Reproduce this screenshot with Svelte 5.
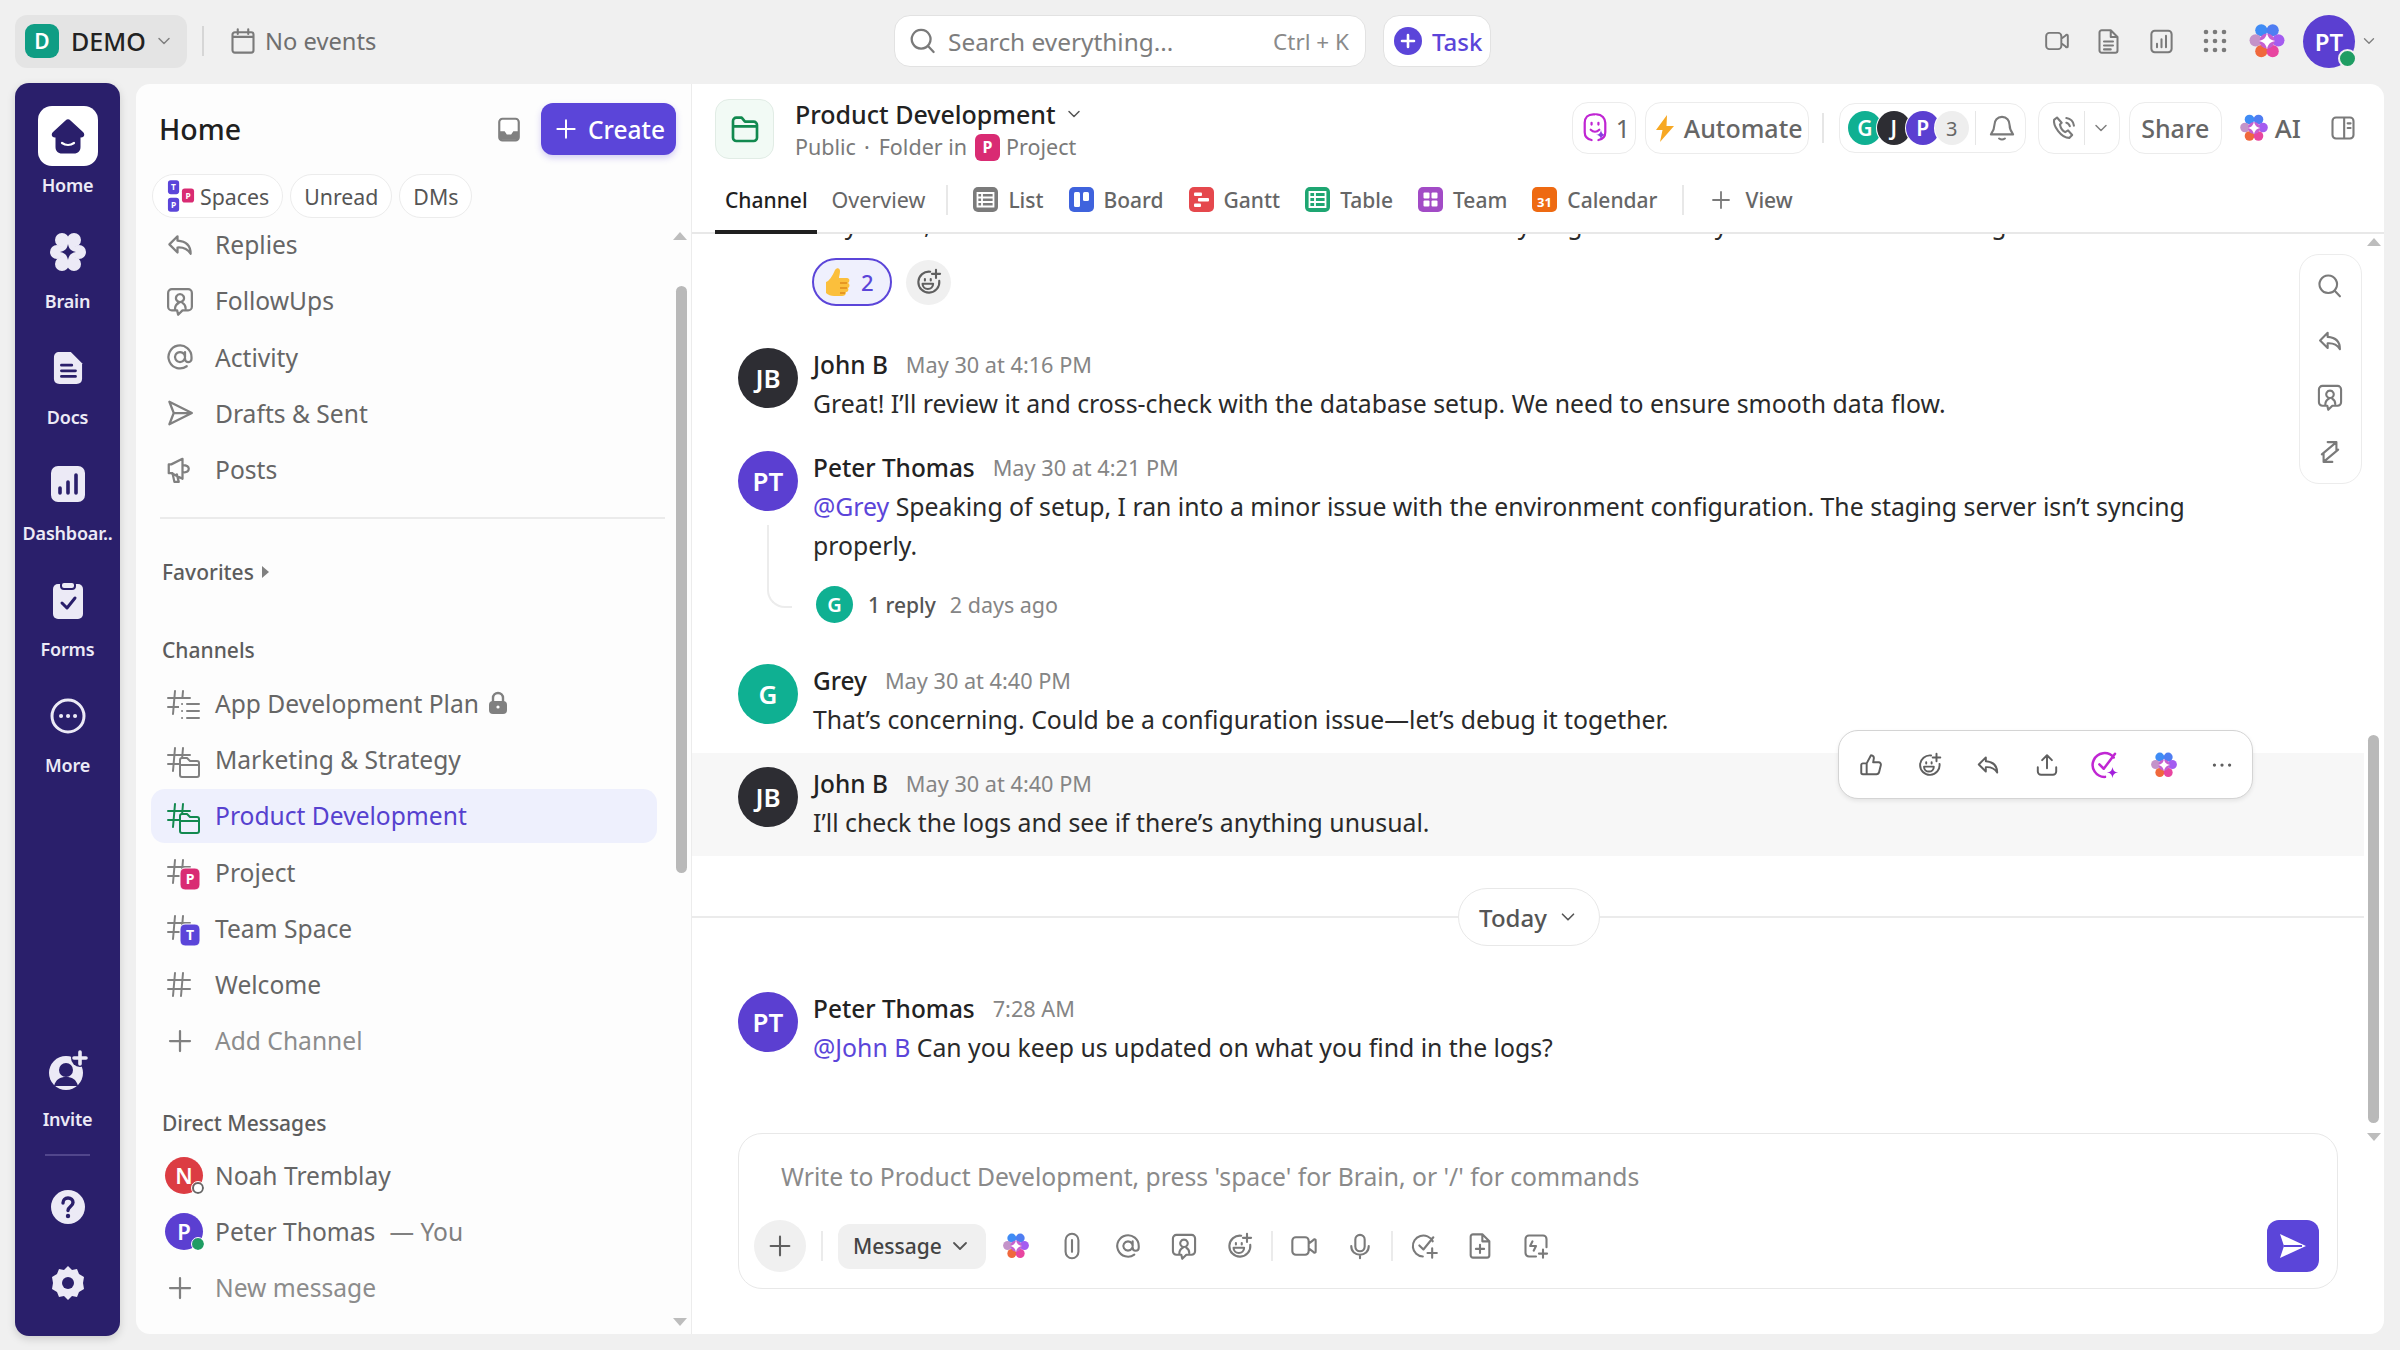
<script>
  const I = {
    chev: "M6 9l6 6 6-6",
    plus: "M12 4v16M4 12h16",
    reply: "M10 5 3.500 11.500 10 18v-4c4.500-.3 8 1 10.500 5 0-6-3.500-10-10.500-10.500z",
    follow: "M5.500 2.500h13a3 3 0 0 1 3 3v11a3 3 0 0 1-3 3H14l-3.500 3.500-.8-3.500H5.500a3 3 0 0 1-3-3v-11a3 3 0 0 1 3-3zM12 6.500a3.200 3.200 0 1 1-.01 0zM8 18.500c0-2.500 1-4 3-5M16.500 18c0-2-.8-3.500-2.500-4.500",
    at: "M12 8a4 4 0 1 0 .01 0zM16 8v5.500a2.600 2.600 0 0 0 5.200 0V12a9.200 9.200 0 1 0-3.800 7.400",
    send: "M3.500 3 21.500 12 3.500 21 7 12zM7 12h14.500",
    horn: "M14 3 5 7.500H3v7h2l9 4.500zM14 8c2.800 0 5 1 5 3s-2.200 3-5 3M6 14.500l1.500 7h3.500l-1.500-6",
    hash: "M9.500 3 8 21M16.500 3 15 21M3.500 8.500h17.500M3 15.500h17.500",
    search: "M10.500 3a7.500 7.500 0 1 0 .01 0zM16 16l4.500 4.800",
    cal: "M5 4.500h14a2 2 0 0 1 2 2V20a2 2 0 0 1-2 2H5a2 2 0 0 1-2-2V6.500a2 2 0 0 1 2-2zM7.500 2v4M16.500 2v4M3 8.500h18",
    video: "M5 4.500h8a3 3 0 0 1 3 3v9a3 3 0 0 1-3 3H5a3 3 0 0 1-3-3v-9a3 3 0 0 1 3-3zM16 10l4-3a1 1 0 0 1 2 .5v9a1 1 0 0 1-2 .5l-4-3",
    doc: "M6 2h8l6 6v12a2 2 0 0 1-2 2H6a2 2 0 0 1-2-2V4a2 2 0 0 1 2-2zM14 2v6h6M8 12h8M8 15.500h8M8 19h6",
    chart: "M6 2.500h12a3 3 0 0 1 3 3v13a3 3 0 0 1-3 3H6a3 3 0 0 1-3-3v-13a3 3 0 0 1 3-3zM8 17v-3M12 17V10M16 17V7",
    panel: "M6 3h12a3 3 0 0 1 3 3v12a3 3 0 0 1-3 3H6a3 3 0 0 1-3-3V6a3 3 0 0 1 3-3zM13 3v18M16 8h2.500M16 12h2.500",
    bell: "M12 2.500c-4 0-6.500 3-6.500 7 0 4-1.500 6-3 8h19c-1.500-2-3-4-3-8 0-4-2.500-7-6.500-7zM9.500 21c1.500 1 3.500 1 5 0",
    phone: "M6 3 3.500 5c-1 5 6 15.500 13 15.500l2.500-2.500-3.500-4-2.500 1.500c-2-1-4-4-4.500-6.500L10 7.500zM14 3.500c3.500.5 6 3 6.500 6.500M14 7.500c1.500.3 2.500 1.300 3 3",
    thumb: "M8 10.500 12 3c2 0 3 1.500 2.500 3.500L14 9.500h5c1.500 0 2.500 1.500 2 3l-1.500 6c-.3 1.300-1.200 2-2.500 2H8zM8 10.500H4.500a1.500 1.500 0 0 0-1.500 1.500v7a1.500 1.500 0 0 0 1.500 1.500H8",
    emoji: "M13 3.200a9 9 0 1 0 7.800 7.800M18 1.500v7M14.500 5h7M8.500 9.500v1.200M13.500 9.500v1.200M6.500 13.500h9c0 2.800-2 4.500-4.500 4.500s-4.500-1.700-4.500-4.500z",
    share: "M12 15V3M7.500 7.500 12 3l4.500 4.500M3.500 14v4a3 3 0 0 0 3 3h11a3 3 0 0 0 3-3v-4",
    dots: "M5 12h.01M12 12h.01M19 12h.01",
    clip: "M6.500 7a5.500 5.500 0 0 1 11 0v10a5.500 5.500 0 0 1-11 0zM12 7v10",
    mic: "M12 2.500a4 4 0 0 1 4 4v6a4 4 0 0 1-8 0v-6a4 4 0 0 1 4-4zM4.500 12c0 5 3.500 7.500 7.500 7.500s7.500-2.500 7.500-7.500M12 19.500v3",
    taskadd: "M19.500 8A9 9 0 1 0 11 21M8 11.500l3.500 3.500L20 4.500M19 14v8M15 18h8",
    docadd: "M6 2h8l6 6v12a2 2 0 0 1-2 2H6a2 2 0 0 1-2-2V4a2 2 0 0 1 2-2zM14 2v6h6M12 11v7M8.500 14.500h7",
    clipadd: "M12 21H6a3 3 0 0 1-3-3V6a3 3 0 0 1 3-3h12a3 3 0 0 1 3 3v7M9 8 7 12h5l-2 4M18 15v7M14.500 18.500h7",
    swap: "M5 14 17 4M10 3.500h7.500V11M19 10 7 20M14 20.500H6.500V13",
    inbox: "M6 2.500h12a3 3 0 0 1 3 3v14a3 3 0 0 1-3 3H6a3 3 0 0 1-3-3v-14a3 3 0 0 1 3-3z",
  };

  const rows = [
    { label: "Replies", d: I.reply },
    { label: "FollowUps", d: I.follow },
    { label: "Activity", d: I.at },
    { label: "Drafts & Sent", d: I.send },
    { label: "Posts", d: I.horn },
  ];

  const channels = [
    { label: "App Development Plan", kind: "list", lock: true },
    { label: "Marketing & Strategy", kind: "folder" },
    { label: "Product Development", kind: "folder", active: true },
    { label: "Project", kind: "P" },
    { label: "Team Space", kind: "T" },
    { label: "Welcome", kind: "plain" },
  ];

  const views = [
    { label: "List", c: "#7b7b7b", g: "list" },
    { label: "Board", c: "#3f63dd", g: "board" },
    { label: "Gantt", c: "#e5484d", g: "gantt" },
    { label: "Table", c: "#1ea672", g: "table" },
    { label: "Team", c: "#a24bc6", g: "team" },
    { label: "Calendar", c: "#ee6a12", g: "cal" },
  ];

  const msgTools = [I.thumb, I.emoji, I.reply, I.share];
  const composerA = [I.clip, I.at, I.follow, I.emoji];
  const composerB = [I.video, I.mic];
  const composerC = [I.taskadd, I.docadd, I.clipadd];
</script>

{#snippet ic(d, size = 26, cls = "")}
  <svg class="i {cls}" width={size} height={size} viewBox="0 0 24 24"><path {d} /></svg>
{/snippet}

{#snippet brain(size = 30)}
  <svg class="brain" width={size} height={size} viewBox="0 0 30 30">
    <circle cx="10.500" cy="6.500" r="4.800" fill="#3f8cf5" />
    <circle cx="19.500" cy="6.500" r="4.800" fill="#4f7df2" />
    <circle cx="24" cy="14.500" r="4.800" fill="#a45cf0" />
    <circle cx="6" cy="14.500" r="4.800" fill="#c493c9" />
    <circle cx="10.500" cy="23" r="4.800" fill="#f0683c" />
    <circle cx="19.500" cy="23" r="4.800" fill="#e845a0" />
    <circle cx="15" cy="15" r="6" fill="#c65fd0" />
    <path d="M15 8.500c.8 4 2.500 5.700 6.500 6.500-4 .8-5.700 2.500-6.500 6.500-.8-4-2.500-5.700-6.500-6.500 4-.8 5.700-2.500 6.500-6.500z" fill="#fff" />
  </svg>
{/snippet}

{#snippet chan(kind, active)}
  <svg class="chan" class:on={active} width="36" height="36" viewBox="0 0 36 36">
    <path class="h" d="M10 6 8 29M18 6l-2 23M3 13h22M3 22h22" />
    {#if kind === "list"}
      <rect x="14" y="14" width="22" height="22" fill="#fdfdfd" />
      <path class="h" d="M17 19h.1M17 26h.1M17 33h.1M22 19h12M22 26h12M22 33h12" />
    {:else if kind === "folder"}
      <path class="h fo" d="M15 18a2 2 0 0 1 2-2h5l3 3h7a2 2 0 0 1 2 2v12a2 2 0 0 1-2 2H17a2 2 0 0 1-2-2zM15 23h19" />
    {:else if kind === "P" || kind === "T"}
      <rect x="15" y="14" width="20" height="22" rx="5" fill={kind === "P" ? "#d92b73" : "#5b45d9"} stroke="#fdfdfd" stroke-width="1" />
      <text x="25" y="30" text-anchor="middle" class="bt">{kind}</text>
    {/if}
  </svg>
{/snippet}

{#snippet viewIcon(v)}
  <svg class="vi" width="25" height="25" viewBox="0 0 25 25">
    <rect width="25" height="25" rx="5" fill={v.c} />
    {#if v.g === "list"}
      <path class="w" d="M4.500 6h16v13.500h-16zM4.500 10.500h16M4.500 15h16M9 6v13.500" />
    {:else if v.g === "board"}
      <rect x="5" y="5" width="6" height="15" rx="1.500" fill="#fff" /><rect x="14" y="5" width="6" height="9" rx="1.500" fill="#fff" />
    {:else if v.g === "gantt"}
      <rect x="5" y="5.500" width="8" height="3.500" rx="1" fill="#fff" /><rect x="9" y="11" width="11" height="3.500" rx="1" fill="#fff" /><rect x="5" y="16.500" width="7" height="3.500" rx="1" fill="#fff" />
    {:else if v.g === "table"}
      <path class="w" d="M4.500 5h16v15h-16zM4.500 10h16M4.500 15h16M10 5v15" />
    {:else if v.g === "team"}
      <rect x="5.500" y="5.500" width="6" height="6" rx="1" fill="#fff" /><rect x="13.500" y="5.500" width="6" height="6" rx="1" fill="#fff" /><rect x="5.500" y="13.500" width="6" height="6" rx="1" fill="#fff" /><rect x="13.500" y="13.500" width="6" height="6" rx="1" fill="#fff" />
    {:else}
      <text x="12.500" y="20" text-anchor="middle" class="cal31">31</text>
    {/if}
  </svg>
{/snippet}

{#snippet msgHead(name, time)}
  <div class="mhead"><span class="name">{name}</span><span class="time">{time}</span></div>
{/snippet}

<div class="app">
  <header class="top">
    <div class="top-left">
      <div class="workspace">
        <span class="ws-badge">D</span>
        <span class="ws-name">DEMO</span>
        {@render ic(I.chev, 20, "chev")}
      </div>
      <span class="vline"></span>
      {@render ic(I.cal, 28, "grey")}
      <span class="noev">No events</span>
    </div>
    <div class="search">
      {@render ic(I.search, 30, "grey")}
      <span class="search-t">Search everything...</span>
      <span class="kbd">Ctrl + K</span>
    </div>
    <div class="taskbtn">
      <svg width="28" height="28" viewBox="0 0 28 28"><circle cx="14" cy="14" r="14" fill="#5b45d9" /><path d="M14 8v12M8 14h12" stroke="#fff" stroke-width="2.600" stroke-linecap="round" /></svg>
      <span>Task</span>
    </div>
    <div class="top-right">
      {@render ic(I.video, 26, "grey")}
      {@render ic(I.doc, 27, "grey")}
      {@render ic(I.chart, 27, "grey")}
      <svg width="24" height="24" viewBox="0 0 24 24" class="grid9">
        {#each [3, 12, 21] as y}{#each [3, 12, 21] as x}<circle cx={x} cy={y} r="2.300" />{/each}{/each}
      </svg>
      {@render brain(38)}
      <div class="me">
        <span class="av me-av">PT</span>
        <span class="dot"></span>
      </div>
      {@render ic(I.chev, 18, "chev mechev")}
    </div>
  </header>

  <div class="body">
    <nav class="nav">
      <div class="nitem">
        <div class="nbox home">
          <svg width="34" height="35" viewBox="0 0 34 35"><path d="M14.500 1.500a3.500 3.500 0 0 1 5 0L32 13c2.500 2.500 1 5.500-2 5.500h-.5V28c0 4-2.500 6.500-6.500 6.500H11c-4 0-6.500-2.500-6.500-6.500v-9.500H4c-3 0-4.500-3-2-5.500z" fill="#2a1f6b" /><path d="M11 24c3.500 2.500 8.500 2.500 12 0" stroke="#fff" stroke-width="2.200" fill="none" stroke-linecap="round" /></svg>
        </div>
        <span>Home</span>
      </div>
      <div class="nitem">
        <div class="nbox">
          <svg width="36" height="42" viewBox="0 0 36 42">
            <g fill="#eceaf6"><circle cx="12" cy="9" r="7" /><circle cx="24" cy="9" r="7" /><circle cx="29" cy="21" r="7" /><circle cx="7" cy="21" r="7" /><circle cx="12" cy="33" r="7" /><circle cx="24" cy="33" r="7" /><circle cx="18" cy="21" r="9" /></g>
            <path d="M18 13c1 5 3 7 8 8-5 1-7 3-8 8-1-5-3-7-8-8 5-1 7-3 8-8z" fill="#2a1f6b" />
          </svg>
        </div>
        <span>Brain</span>
      </div>
      <div class="nitem">
        <div class="nbox">
          <svg width="30" height="34" viewBox="0 0 32 36"><path d="M7 1h12l12 12v16c0 4-2 6-6 6H7c-4 0-6-2-6-6V7c0-4 2-6 6-6z" fill="#eceaf6" /><path d="M9 15h11M9 21h15M9 27h15" stroke="#2a1f6b" stroke-width="3" stroke-linecap="round" /></svg>
        </div>
        <span>Docs</span>
      </div>
      <div class="nitem">
        <div class="nbox">
          <svg width="34" height="36" viewBox="0 0 34 36"><rect width="34" height="36" rx="7" fill="#eceaf6" /><path d="M9 27v-5M17 27V16M25 27V9" stroke="#2a1f6b" stroke-width="3.600" stroke-linecap="round" /></svg>
        </div>
        <span>Dashboar..</span>
      </div>
      <div class="nitem">
        <div class="nbox">
          <svg width="30" height="38" viewBox="0 0 30 38"><rect y="3" width="30" height="35" rx="5" fill="#eceaf6" /><rect x="8" y="1" width="14" height="7" rx="3" fill="#eceaf6" stroke="#2a1f6b" stroke-width="2" /><path d="M9 22l5 5 8-10" stroke="#2a1f6b" stroke-width="3" fill="none" stroke-linecap="round" stroke-linejoin="round" /></svg>
        </div>
        <span>Forms</span>
      </div>
      <div class="nitem">
        <div class="nbox">
          <svg width="36" height="36" viewBox="0 0 36 36"><circle cx="18" cy="18" r="16" fill="none" stroke="#eceaf6" stroke-width="3" /><path d="M11 18h.1M18 18h.1M25 18h.1" stroke="#eceaf6" stroke-width="4" stroke-linecap="round" /></svg>
        </div>
        <span>More</span>
      </div>
      <div class="nbottom">
        <div class="nitem">
          <div class="nbox">
            <svg width="40" height="40" viewBox="0 0 40 40"><circle cx="18" cy="23" r="17" fill="#eceaf6" /><circle cx="18" cy="20" r="7" fill="#2a1f6b" /><path d="M6 36c2-7 6-9 12-9s10 2 12 9z" fill="#2a1f6b" /><circle cx="32" cy="8" r="9" fill="#2a1f6b" /><path d="M32 2v12M26 8h12" stroke="#eceaf6" stroke-width="3.600" stroke-linecap="round" /></svg>
          </div>
          <span>Invite</span>
        </div>
        <span class="nline"></span>
        <div class="nbox nhelp">
          <svg width="34" height="34" viewBox="0 0 34 34"><circle cx="17" cy="17" r="17" fill="#eceaf6" /><path d="M12 13c0-3 2-5 5-5s5 2 5 4.500c0 4-5 4-5 8" stroke="#2a1f6b" stroke-width="3.400" fill="none" stroke-linecap="round" /><circle cx="17" cy="26" r="2.200" fill="#2a1f6b" /></svg>
        </div>
        <div class="nbox ngear">
          <svg width="34" height="36" viewBox="0 0 34 36"><path d="M17 1l4 4 5-1 2 5 5 3-1 6 1 6-5 3-2 5-5-1-4 4-4-4-5 1-2-5-5-3 1-6-1-6 5-3 2-5 5 1z" fill="#eceaf6" /><circle cx="17" cy="18" r="6" fill="#2a1f6b" /></svg>
        </div>
      </div>
    </nav>

    <aside class="panel">
      <div class="phead">
        <span class="ptitle">Home</span>
        <svg class="inbox" width="26" height="28" viewBox="0 0 24 24"><path d={I.inbox} fill="#fff" stroke="#808080" stroke-width="2" /><path d="M3 14h5l2 3h4l2-3h5v6a2 2 0 0 1-2 2H5a2 2 0 0 1-2-2z" fill="#808080" /></svg>
        <button class="create">{@render ic(I.plus, 26, "wh")}<span>Create</span></button>
      </div>
      <div class="pills">
        <span class="pill">
          <svg width="30" height="36" viewBox="0 0 30 36">
            <rect x="1" y="1" width="12" height="15" rx="3" fill="#5b45d9" /><rect x="1" y="20" width="12" height="15" rx="3" fill="#5b45d9" /><rect x="16" y="10" width="13" height="15" rx="3" fill="#d92b73" />
            <text x="7" y="12" class="st">T</text><text x="7" y="31" class="st">P</text><text x="22.500" y="21" class="st">P</text>
          </svg>
          Spaces
        </span>
        <span class="pill">Unread</span>
        <span class="pill">DMs</span>
      </div>
      <div class="pscroll">
        <div class="plist">
          {#each rows as r}
            <div class="row">
              <span class="ricon">{@render ic(r.d, 30, "rowi")}</span>
              <span>{r.label}</span>
            </div>
          {/each}
          <div class="phr"></div>
          <div class="sect fav">Favorites <span class="tri"></span></div>
          <div class="sect chs">Channels</div>
          {#each channels as c}
            <div class="row" class:active={c.active}>
              <span class="ricon">{@render chan(c.kind, c.active)}</span>
              <span>{c.label}</span>
              {#if c.lock}
                <svg class="lock" width="20" height="24" viewBox="0 0 20 24"><path d="M5 11V7a5 5 0 0 1 10 0v4" fill="none" stroke="#808080" stroke-width="2.400" /><rect x="1" y="10" width="18" height="13" rx="4" fill="#808080" /><circle cx="10" cy="16" r="1.600" fill="#fff" /></svg>
              {/if}
            </div>
          {/each}
          <div class="row muted"><span class="ricon">{@render ic(I.plus, 30, "rowi")}</span><span>Add Channel</span></div>
          <div class="sect dms">Direct Messages</div>
          <div class="row">
            <span class="ricon"><span class="dmav red">N<span class="pres off"></span></span></span>
            <span>Noah Tremblay</span>
          </div>
          <div class="row">
            <span class="ricon"><span class="dmav pur">P<span class="pres on"></span></span></span>
            <span>Peter Thomas</span><span class="you">— You</span>
          </div>
          <div class="row muted"><span class="ricon">{@render ic(I.plus, 30, "rowi")}</span><span>New message</span></div>
        </div>
      </div>
      <span class="sb-up p"></span>
      <span class="sb-thumb p"></span>
      <span class="sb-down p"></span>
    </aside>

    <main class="main">
      <div class="mh">
        <div class="folderbox">
          <svg class="i fol" width="32" height="32" viewBox="0 0 24 24"><path d="M3 6a2.500 2.500 0 0 1 2.500-2.500h4L12 6.500h6.500A2.500 2.500 0 0 1 21 9v9.500a2.500 2.500 0 0 1-2.500 2.500h-13A2.500 2.500 0 0 1 3 18.500zM3 10h18" /></svg>
        </div>
        <div class="mh-t">
          <div class="mh-title">Product Development {@render ic(I.chev, 20, "chev dk")}</div>
          <div class="mh-sub"><span>Public</span><span class="mid">·</span><span>Folder in</span><span class="pbadge">P</span><span>Project</span></div>
        </div>
        <div class="mh-r">
          <div class="hbtn one">
            <svg width="24" height="32" viewBox="0 0 28 36"><path d="M14 2h-2C6 2 2 6 2 12v11c0 5 3 8 8 9M18 32c5-1 8-3 8-9V12c0-5-4-10-10-10M10 12v2M18 12v2M9 20c3 3 7 3 10 0" fill="none" stroke="#c026d3" stroke-width="2.600" stroke-linecap="round" /><path d="M21 20c.6 4 2 5.500 6 6-4 .5-5.400 2-6 6-.6-4-2-5.500-6-6 4-.5 5.400-2 6-6z" fill="#8b3fe0" /></svg>
            <span>1</span>
          </div>
          <div class="hbtn auto">
            <svg width="20" height="27" viewBox="0 0 20 27"><path d="M12 0 1 15h6.500L5 27 19 11h-7.500z" fill="#f7a823" /></svg>
            <span>Automate</span>
          </div>
          <span class="hv"></span>
          <div class="hbtn people">
            <span class="av s g">G</span><span class="av s k">J</span><span class="av s p">P</span><span class="av s more">3</span>
            <span class="hv in"></span>
            {@render ic(I.bell, 28, "grey bell")}
          </div>
          <div class="hbtn call">
            {@render ic(I.phone, 28, "grey")}
            <span class="hv in2"></span>
            {@render ic(I.chev, 20, "chev")}
          </div>
          <div class="hbtn sharebtn">Share</div>
          <div class="aib">{@render brain(30)}<span>AI</span></div>
          {@render ic(I.panel, 28, "grey pn")}
        </div>
      </div>

      <div class="tabs">
        <span class="tab cur">Channel</span>
        <span class="tab ov">Overview</span>
        <span class="tv"></span>
        {#each views as v}
          <span class="vtab">{@render viewIcon(v)}<span>{v.label}</span></span>
        {/each}
        <span class="tv end"></span>
        <span class="vtab add">{@render ic(I.plus, 24, "grey")}<span>View</span></span>
      </div>

      <div class="feed">
        <div class="feed-in">
          <p class="cut">Hey team, the latest build is done and the old schema is to try to go on the day of the launch and bring it to the team.</p>
          <div class="reacts">
            <span class="react">
              <svg width="26" height="30" viewBox="0 0 26 30"><path d="M10 3c2-3 5-2 5 1 0 3-1 5-1 7h8c3 0 3 4 1 5 2 1 2 4 0 5 1 2 0 4-2 4 0 3-2 4-4 4H9c-3 0-6-1-8-3V15c3-1 6-5 9-12z" fill="#fbbf3c" /><path d="M15 16h7M15 21h7M15 26h5" stroke="#e08a1b" stroke-width="1.400" /></svg>
              <span>2</span>
            </span>
            <span class="addreact">{@render ic(I.emoji, 28, "dark")}</span>
          </div>

          <div class="msg jb1">
            <span class="av big k">JB</span>
            <div class="mbody">
              {@render msgHead("John B", "May 30 at 4:16 PM")}
              <p>Great! I’ll review it and cross-check with the database setup. We need to ensure smooth data flow.</p>
            </div>
          </div>

          <div class="msg pt1">
            <span class="av big p">PT</span>
            <span class="thread"></span>
            <div class="mbody">
              {@render msgHead("Peter Thomas", "May 30 at 4:21 PM")}
              <p><span class="ment">@Grey</span> Speaking of setup, I ran into a minor issue with the environment configuration. The staging server isn’t syncing properly.</p>
              <div class="replies">
                <span class="av rg g">G</span>
                <span class="rn">1 reply</span>
                <span class="rt">2 days ago</span>
              </div>
            </div>
          </div>

          <div class="msg gr">
            <span class="av big g">G</span>
            <div class="mbody">
              {@render msgHead("Grey", "May 30 at 4:40 PM")}
              <p>That’s concerning. Could be a configuration issue—let’s debug it together.</p>
            </div>
          </div>

          <div class="msg hover">
            <span class="av big k">JB</span>
            <div class="mbody">
              {@render msgHead("John B", "May 30 at 4:40 PM")}
              <p>I’ll check the logs and see if there’s anything unusual.</p>
            </div>
            <div class="tools">
              {#each msgTools as d}
                <span class="tl">{@render ic(d, 26, "dark")}</span>
              {/each}
              <span class="tl">
                <svg width="30" height="30" viewBox="0 0 24 24" class="i pk"><path d="M19 6A9.500 9.500 0 1 0 12 21.500M7.500 11.500l3.500 3.500L20 3" /><path class="pkf" d="M18 13.500c.5 3 1.500 4 4.500 4.500-3 .5-4 1.500-4.500 4.500-.5-3-1.500-4-4.500-4.500 3-.5 4-1.500 4.500-4.500z" /></svg>
              </span>
              <span class="tl">{@render brain(28)}</span>
              <span class="tl">{@render ic(I.dots, 26, "dark fat")}</span>
            </div>
          </div>

          <div class="today">
            <span class="tline"></span>
            <span class="tpill">Today {@render ic(I.chev, 22, "chev dk")}</span>
            <span class="tline"></span>
          </div>

          <div class="msg last">
            <span class="av big p">PT</span>
            <div class="mbody">
              {@render msgHead("Peter Thomas", "7:28 AM")}
              <p><span class="ment">@John B</span> Can you keep us updated on what you find in the logs?</p>
            </div>
          </div>
        </div>

        <div class="rail">
          {@render ic(I.search, 28, "grey")}
          {@render ic(I.reply, 28, "grey")}
          {@render ic(I.follow, 28, "grey")}
          {@render ic(I.swap, 28, "grey")}
        </div>
        <span class="sb-up m"></span>
        <span class="sb-thumb m"></span>
        <span class="sb-down m"></span>
      </div>

      <div class="composer">
        <div class="ph">Write to Product Development, press 'space' for Brain, or '/' for commands</div>
        <div class="ctools">
          <span class="cplus">{@render ic(I.plus, 28, "dark")}</span>
          <span class="cv first"></span>
          <span class="cmsg">Message {@render ic(I.chev, 24, "chev dk")}</span>
          <span class="cb brainb">{@render brain(28)}</span>
          {#each composerA as d}<span class="cb">{@render ic(d, 28, "grey")}</span>{/each}
          <span class="cv"></span>
          {#each composerB as d}<span class="cb">{@render ic(d, 28, "grey")}</span>{/each}
          <span class="cv"></span>
          {#each composerC as d}<span class="cb">{@render ic(d, 28, "grey")}</span>{/each}
          <span class="csend">
            <svg width="30" height="28" viewBox="0 0 30 28"><path d="M2 2 28 14 2 26l4-12z" fill="#fff" /><path d="M6 14h18" stroke="#5b45d9" stroke-width="2" /></svg>
          </span>
        </div>
      </div>
    </main>
  </div>
</div>

<style>
  :global(body) {
    margin: 0;
    background: #f0f0f0;
  }

  .app {
    width: 2400px;
    height: 1350px;
    overflow: hidden;
    display: flex;
    flex-direction: column;
    background: #f0f0f0;
    font-family: "Noto Sans", "Open Sans", sans-serif;
    font-size: 24px;
    color: #2a2a2a;
  }

  p { margin: 0; }

  .i {
    fill: none;
    stroke: currentColor;
    stroke-width: 1.8;
    stroke-linecap: round;
    stroke-linejoin: round;
    flex: none;
    display: block;
  }
  .grey { color: #7a7a7a; }
  .dark { color: #5f5f5f; }
  .wh { color: #fff; }
  .chev { color: #808080; }
  .dk { color: #555; }
  .fat { stroke-width: 3; }
  .brain { flex: none; display: block; }

  .av {
    display: flex;
    align-items: center;
    justify-content: center;
    border-radius: 50%;
    color: #fff;
    font-weight: 600;
    flex: none;
  }
  .av.g { background: #0fb092; }
  .av.k { background: #2d2d33; }
  .av.p { background: #5b3fd1; }

  /* top bar */
  .top {
    height: 84px;
    flex: none;
    display: flex;
    align-items: center;
    padding: 0 0 2px 15px;
    box-sizing: border-box;
  }
  .top-left {
    width: 879px;
    display: flex;
    align-items: center;
  }
  .workspace {
    width: 172px;
    height: 53px;
    box-sizing: border-box;
    background: #e4e4e4;
    border-radius: 12px;
    display: flex;
    align-items: center;
    padding-left: 10px;
  }
  .ws-badge {
    width: 34px;
    height: 34px;
    border-radius: 9px;
    background: #0f9d84;
    color: #fff;
    font-size: 21px;
    font-weight: 600;
    display: flex;
    align-items: center;
    justify-content: center;
  }
  .ws-name {
    font-size: 25px;
    font-weight: 500;
    color: #222;
    margin: 0 8px 0 12px;
  }
  .vline {
    width: 2px;
    height: 30px;
    background: #d6d6d6;
    margin: 0 25px 0 15px;
  }
  .noev {
    margin-left: 8px;
    color: #6f6f6f;
    font-size: 23.700px;
  }
  .search {
    width: 472px;
    height: 52px;
    box-sizing: border-box;
    background: #fff;
    border: 1px solid #e2e2e2;
    border-radius: 16px;
    display: flex;
    align-items: center;
    padding: 0 16px 0 13px;
  }
  .search-t {
    margin-left: 10px;
    color: #7d7d7d;
    font-size: 24.400px;
  }
  .kbd {
    margin-left: auto;
    color: #8a8a8a;
    font-size: 22.500px;
  }
  .taskbtn {
    width: 108px;
    height: 52px;
    box-sizing: border-box;
    margin-left: 17px;
    background: #fff;
    border: 1px solid #e2e2e2;
    border-radius: 16px;
    display: flex;
    align-items: center;
    gap: 10px;
    padding-left: 10px;
    color: #5b45d9;
    font-size: 24px;
    font-weight: 500;
  }
  .top-right {
    margin-left: auto;
    display: flex;
    align-items: center;
    padding-right: 22px;
  }
  .top-right > :global(svg:nth-child(1)) { margin-right: 25px; }
  .top-right > :global(svg:nth-child(2)) { margin-right: 26px; }
  .top-right > :global(svg:nth-child(3)) { margin-right: 28px; }
  .top-right > :global(svg:nth-child(4)) { margin-right: 21px; }
  .top-right > :global(svg:nth-child(5)) { margin-right: 17px; }
  .grid9 { fill: #7a7a7a; }
  .me {
    position: relative;
    width: 52px;
    height: 53px;
    margin-right: 5px;
  }
  .me-av {
    width: 52px;
    height: 53px;
    background: #5b3fd1;
    font-size: 24px;
  }
  .dot {
    position: absolute;
    right: -2px;
    bottom: 0;
    width: 15px;
    height: 15px;
    border-radius: 50%;
    background: #1f9d63;
    border: 2px solid #f0f0f0;
  }

  /* app layout */
  .body {
    flex: 1;
    min-height: 0;
    display: flex;
    padding: 0 16px 16px 15px;
  }

  /* left nav */
  .nav {
    width: 105px;
    flex: none;
    margin: -1px 16px -2px 0;
    padding: 23px 0;
    box-sizing: border-box;
    background: #2a1f6b;
    border-radius: 14px;
    display: flex;
    flex-direction: column;
    align-items: center;
    color: #eceaf6;
    box-shadow: 0 3px 8px rgba(0, 0, 0, .15);
  }
  .nitem {
    height: 116px;
    flex: none;
    display: flex;
    flex-direction: column;
    align-items: center;
  }
  .nitem span {
    margin-top: 7px;
    font-size: 18px;
    line-height: 25px;
    font-weight: 600;
    white-space: nowrap;
    letter-spacing: -.2px;
  }
  .nbox {
    width: 60px;
    height: 60px;
    flex: none;
    display: flex;
    align-items: center;
    justify-content: center;
  }
  .home {
    background: #fff;
    border-radius: 14px;
  }
  .nbottom {
    margin-top: auto;
    display: flex;
    flex-direction: column;
    align-items: center;
  }
  .nbottom .nitem { height: 91px; }
  .nline {
    width: 45px;
    height: 2px;
    background: #51468c;
    margin-top: 23px;
  }
  .nhelp { margin-top: 21px; }
  .ngear { margin-top: 16px; }

  /* side panel */
  .panel {
    width: 556px;
    flex: none;
    position: relative;
    background: #fdfdfd;
    border-radius: 14px 0 0 14px;
    border-right: 1px solid #ececec;
    box-sizing: border-box;
    display: flex;
    flex-direction: column;
    overflow: hidden;
  }
  .phead {
    display: flex;
    align-items: center;
    padding: 19px 15px 0 23px;
  }
  .ptitle {
    font-size: 28.500px;
    font-weight: 500;
    color: #202020;
  }
  .inbox { margin-left: auto; margin-right: 19px; }
  .create {
    width: 135px;
    height: 52px;
    border: 0;
    border-radius: 12px;
    background: #5b45d9;
    color: #fff;
    font: 500 24.500px "Noto Sans", sans-serif;
    display: flex;
    align-items: center;
    gap: 9px;
    padding: 0 0 0 12px;
    box-shadow: 0 3px 6px rgba(91, 69, 217, .25);
  }
  .pills {
    display: flex;
    gap: 7px;
    margin: 19px 0 0 16px;
  }
  .pill {
    height: 44px;
    box-sizing: border-box;
    border: 1px solid #ececec;
    border-radius: 22px;
    background: #fff;
    padding: 0 13px;
    display: flex;
    align-items: center;
    gap: 5px;
    font-size: 21.300px;
    color: #555;
  }
  .pill svg { width: 28px; height: 34px; margin-left: 1px; }
  .st {
    font: 700 9px "Noto Sans", sans-serif;
    fill: #fff;
    text-anchor: middle;
  }
  .pscroll {
    flex: 1;
    min-height: 0;
    overflow: hidden;
    margin-top: 10px;
  }
  .plist {
    margin: -10px 34px 0 15px;
  }
  .row {
    height: 53.250px;
    margin-bottom: 3px;
    border-radius: 14px;
    display: flex;
    align-items: center;
    color: #666;
    font-size: 24.600px;
    white-space: nowrap;
  }
  .ricon {
    width: 64px;
    flex: none;
    padding-left: 14px;
    box-sizing: border-box;
    display: flex;
  }
  .rowi { color: #808080; }
  .row.active {
    background: #eef0fd;
    color: #5641cf;
  }
  .muted { color: #8c8c8c; }
  .lock { margin-left: 9px; }
  .you { margin-left: 14px; color: #808080; }
  .chan { display: block; }
  .h {
    fill: none;
    stroke: #808080;
    stroke-width: 2;
    stroke-linecap: round;
    stroke-linejoin: round;
  }
  .fo { fill: #fdfdfd; }
  .on .h { stroke: #12894f; }
  .on .fo { fill: #eef0fd; }
  .bt {
    font: 700 14px "Noto Sans", sans-serif;
    fill: #fff;
  }
  .phr {
    height: 2px;
    background: #ebebeb;
    margin: 21px -8px 0 9px;
  }
  .sect {
    height: 30px;
    display: flex;
    align-items: center;
    padding-left: 11px;
    font-size: 21px;
    color: #5c5c5c;
    font-weight: 500;
  }
  .fav { margin-top: 38px; gap: 8px; }
  .chs { margin: 48px 0 11.500px; }
  .dms { margin: 40.500px 0 10.500px; }
  .tri {
    border-left: 7px solid #808080;
    border-top: 6px solid transparent;
    border-bottom: 6px solid transparent;
  }
  .dmav {
    position: relative;
    width: 38px;
    height: 37px;
    margin-left: 0;
    border-radius: 50%;
    color: #fff;
    font-size: 22px;
    font-weight: 600;
    display: flex;
    align-items: center;
    justify-content: center;
  }
  .red { background: #dc3c43; }
  .pur { background: #5b3fd1; }
  .pres {
    position: absolute;
    right: -1px;
    bottom: 0;
    width: 12px;
    height: 12px;
    border-radius: 50%;
    box-sizing: border-box;
    border: 2px solid #fff;
    outline: 1px solid #fff;
  }
  .pres.on { background: #1f9d63; border-color: #1f9d63; }
  .pres.off { background: #fff; border-color: #666; }

  .sb-up, .sb-down {
    position: absolute;
    width: 0;
    height: 0;
    border-left: 7px solid transparent;
    border-right: 7px solid transparent;
  }
  .sb-up { border-bottom: 8px solid #bdbdbd; }
  .sb-down { border-top: 8px solid #bdbdbd; }
  .sb-thumb {
    position: absolute;
    width: 11px;
    border-radius: 6px;
    background: #b9b9b9;
  }
  .sb-up.p { top: 148px; right: 4px; }
  .sb-thumb.p { top: 202px; right: 4px; height: 587px; }
  .sb-down.p { bottom: 8px; right: 4px; }
  .sb-up.m { top: 4px; right: 3px; }
  .sb-thumb.m { top: 501px; right: 5px; height: 388px; }
  .sb-down.m { bottom: -8px; right: 3px; }

  /* main */
  .main {
    flex: 1;
    min-width: 0;
    background: #fff;
    border-radius: 0 14px 14px 0;
    display: flex;
    flex-direction: column;
  }
  .mh {
    height: 90px;
    flex: none;
    box-sizing: border-box;
    display: flex;
    align-items: flex-start;
    padding: 15px 27px 0 23px;
  }
  .folderbox {
    width: 59px;
    height: 60px;
    box-sizing: border-box;
    background: #f2faf5;
    border: 1px solid #e1ece5;
    border-radius: 14px;
    display: flex;
    align-items: center;
    justify-content: center;
  }
  .fol { color: #12894f; stroke-width: 2; }
  .mh-t { margin-left: 21px; }
  .mh-title {
    display: flex;
    align-items: center;
    gap: 8px;
    font-size: 25px;
    line-height: 30px;
    font-weight: 500;
    color: #222;
  }
  .mh-sub {
    display: flex;
    align-items: center;
    margin-top: 4px;
    font-size: 21.500px;
    line-height: 28px;
    color: #7a7a7a;
  }
  .mid { margin: 0 9px 0 8px; }
  .pbadge {
    width: 25px;
    height: 27px;
    border-radius: 6px;
    background: #d92b73;
    color: #fff;
    font-size: 16px;
    font-weight: 700;
    display: flex;
    align-items: center;
    justify-content: center;
    margin: 0 6px 0 8px;
  }
  .mh-r {
    margin-left: auto;
    margin-top: 3px;
    display: flex;
    align-items: center;
  }
  .hbtn {
    height: 52px;
    box-sizing: border-box;
    border: 1px solid #ececec;
    border-radius: 16px;
    display: flex;
    align-items: center;
    color: #666;
    font-size: 25px;
  }
  .one { width: 64px; gap: 9px; padding-left: 10px; margin-right: 9px; }
  .auto { width: 164px; gap: 9px; padding-left: 9px; }
  .auto span { font-weight: 500; }
  .hv {
    width: 2px;
    height: 30px;
    background: #e6e6e6;
    margin: 0 15px 0 13px;
  }
  .people { width: 187px; height: 50px; padding-left: 8px; margin-right: 12px; }
  .av.s {
    width: 34px;
    height: 34px;
    font-size: 21px;
    box-shadow: 0 0 0 1px #fff;
  }
  .av.s + .av.s { margin-left: -5px; }
  .av.more {
    background: #eeeeee;
    color: #666;
    font-weight: 400;
    font-size: 20px;
  }
  .hv.in { height: 34px; width: 1px; margin: 0 8px 0 6px; }
  .bell { margin-left: 4px; }
  .call { width: 82px; padding-left: 11px; margin-right: 9px; }
  .hv.in2 { height: 34px; width: 1px; margin: 0 6px 0 6px; }
  .sharebtn { width: 93px; justify-content: center; font-weight: 500; }
  .aib {
    display: flex;
    align-items: center;
    gap: 6px;
    margin-left: 17px;
    color: #666;
    font-size: 26px;
    font-weight: 500;
  }
  .pn { margin-left: 28px; }

  .tabs {
    height: 60px;
    flex: none;
    box-sizing: border-box;
    border-bottom: 2px solid #e8e8e8;
    padding: 0 0 7px 23px;
    display: flex;
    align-items: center;
    font-size: 21px;
    color: #666;
    position: relative;
  }
  .tab { padding: 0 10px; white-space: nowrap; }
  .ov { font-size: 21.500px; }
  .cur { color: #1f1f1f; font-size: 21px; font-weight: 500; }
  .cur::after {
    content: "";
    position: absolute;
    left: 23px;
    bottom: -2px;
    width: 102px;
    height: 4px;
    background: #202020;
  }
  .ov { margin-left: 4px; }
  .tv {
    width: 2px;
    height: 30px;
    background: #e8e8e8;
    margin: 0 25px 0 11px;
  }
  .tv.end { margin-left: 0; }
  .vtab {
    display: flex;
    align-items: center;
    gap: 10px;
    margin-right: 25px;
    white-space: nowrap;
    font-weight: 500;
  }
  .vtab.add { gap: 12px; }
  .vi { display: block; flex: none; }
  .w {
    fill: none;
    stroke: #fff;
    stroke-width: 1.800;
  }
  .cal31 {
    font: 700 13px "Noto Sans", sans-serif;
    fill: #fff;
  }

  /* messages */
  .feed {
    flex: 1;
    min-height: 0;
    position: relative;
  }
  .feed-in {
    height: 100%;
    overflow: hidden;
  }
  .cut {
    margin: -29px 0 0 121px;
    line-height: 39px;
    white-space: nowrap;
    color: #2a2a2a;
    font-size: 24.800px;
  }
  .reacts {
    display: flex;
    align-items: center;
    gap: 14px;
    margin: 14px 0 0 120px;
  }
  .react {
    width: 80px;
    height: 48px;
    box-sizing: border-box;
    border: 2px solid #5b45d9;
    border-radius: 24px;
    background: #eff0fd;
    color: #5b45d9;
    font-weight: 500;
    font-size: 22px;
    display: flex;
    align-items: center;
    gap: 10px;
    padding-left: 11px;
  }
  .addreact {
    width: 45px;
    height: 45px;
    border-radius: 50%;
    background: #f0f0f0;
    display: flex;
    align-items: center;
    justify-content: center;
  }
  .msg {
    position: relative;
    display: flex;
    gap: 15px;
    padding-left: 46px;
    margin-right: 20px;
  }
  .av.big {
    width: 60px;
    height: 60px;
    font-size: 26px;
  }
  .mhead {
    height: 32px;
    display: flex;
    align-items: center;
    gap: 18px;
  }
  .name {
    font-size: 24.400px;
    font-weight: 500;
    color: #222;
  }
  .time {
    font-size: 21.700px;
    color: #858585;
  }
  .mbody { flex: 1; min-width: 0; }
  .mbody p {
    margin: 4px 0 1px;
    line-height: 39px;
    font-size: 24.800px;
    color: #2a2a2a;
    max-width: 1440px;
  }
  .ment { color: #5b45d9; }
  .jb1 { margin-top: 42px; }
  .pt1 { margin-top: 27px; }
  .gr { margin-top: 41px; }
  .hover {
    margin-top: 13px;
    padding-top: 14px;
    padding-bottom: 13px;
    background: #f7f7f7;
  }
  .last { margin-top: 46px; }
  .thread {
    position: absolute;
    left: 75px;
    top: 74px;
    width: 25px;
    height: 83px;
    box-sizing: border-box;
    border-left: 2px solid #ececec;
    border-bottom: 2px solid #ececec;
    border-bottom-left-radius: 18px;
  }
  .replies {
    display: flex;
    align-items: center;
    margin: 21px 0 0 3px;
  }
  .rg {
    width: 37px;
    height: 37px;
    font-size: 20px;
  }
  .rn {
    margin-left: 15px;
    font-size: 21px;
    font-weight: 500;
    color: #555;
  }
  .rt {
    margin-left: 14px;
    font-size: 21.500px;
    color: #858585;
  }
  .tools {
    position: absolute;
    top: -23px;
    right: 111px;
    width: 415px;
    height: 69px;
    box-sizing: border-box;
    background: #fff;
    border: 1px solid #d4d4d4;
    border-radius: 20px;
    box-shadow: 0 2px 4px rgba(0, 0, 0, .08);
    display: flex;
    align-items: center;
    padding-left: 3px;
  }
  .tl {
    width: 58.500px;
    display: flex;
    align-items: center;
    justify-content: center;
  }
  .pk { color: #c026d3; stroke-width: 2; }
  .pkf { fill: #a21fdc; stroke: none; }
  .today {
    display: flex;
    align-items: center;
    height: 58px;
    margin: 32px 20px 0 0;
  }
  .tline {
    flex: 1;
    height: 2px;
    background: #ebebeb;
  }
  .tline:first-child { flex: none; width: 766px; }
  .tpill {
    width: 142px;
    height: 58px;
    box-sizing: border-box;
    border: 1px solid #e8e8e8;
    border-radius: 29px;
    background: #fff;
    color: #555;
    font-weight: 500;
    display: flex;
    align-items: center;
    justify-content: center;
    gap: 10px;
  }
  .rail {
    position: absolute;
    top: 20px;
    right: 22px;
    width: 63px;
    height: 230px;
    box-sizing: border-box;
    background: #fff;
    border: 1px solid #ececec;
    border-radius: 20px;
    display: flex;
    flex-direction: column;
    align-items: center;
    justify-content: space-around;
    padding: 3px 2px 3px 0;
  }

  /* composer */
  .composer {
    flex: none;
    height: 156px;
    box-sizing: border-box;
    margin: 0 46px 45px;
    border: 1px solid #e8e8e8;
    border-radius: 24px;
    background: #fff;
    display: flex;
    flex-direction: column;
  }
  .ph {
    margin: 26px 0 0 42px;
    line-height: 34px;
    font-size: 24.700px;
    color: #8a8a8a;
  }
  .ctools {
    display: flex;
    align-items: center;
    margin-top: 26px;
    padding: 0 18px 0 15px;
  }
  .cplus {
    width: 52px;
    height: 52px;
    border-radius: 50%;
    background: #f0f0f0;
    display: flex;
    align-items: center;
    justify-content: center;
  }
  .cv {
    width: 2px;
    height: 30px;
    background: #ebebeb;
    margin: 0 3px;
  }
  .cv.first { margin: 0 15px; }
  .cmsg {
    width: 148px;
    height: 45px;
    box-sizing: border-box;
    border-radius: 12px;
    background: #f0f0f0;
    display: flex;
    align-items: center;
    gap: 6px;
    padding-left: 15px;
    color: #444;
    font-size: 21px;
    font-weight: 500;
  }
  .cb {
    width: 56px;
    display: flex;
    justify-content: center;
  }
  .brainb { margin-left: 2px; }
  .csend {
    margin-left: auto;
    width: 52px;
    height: 52px;
    border-radius: 12px;
    background: #5b45d9;
    display: flex;
    align-items: center;
    justify-content: center;
  }
</style>
